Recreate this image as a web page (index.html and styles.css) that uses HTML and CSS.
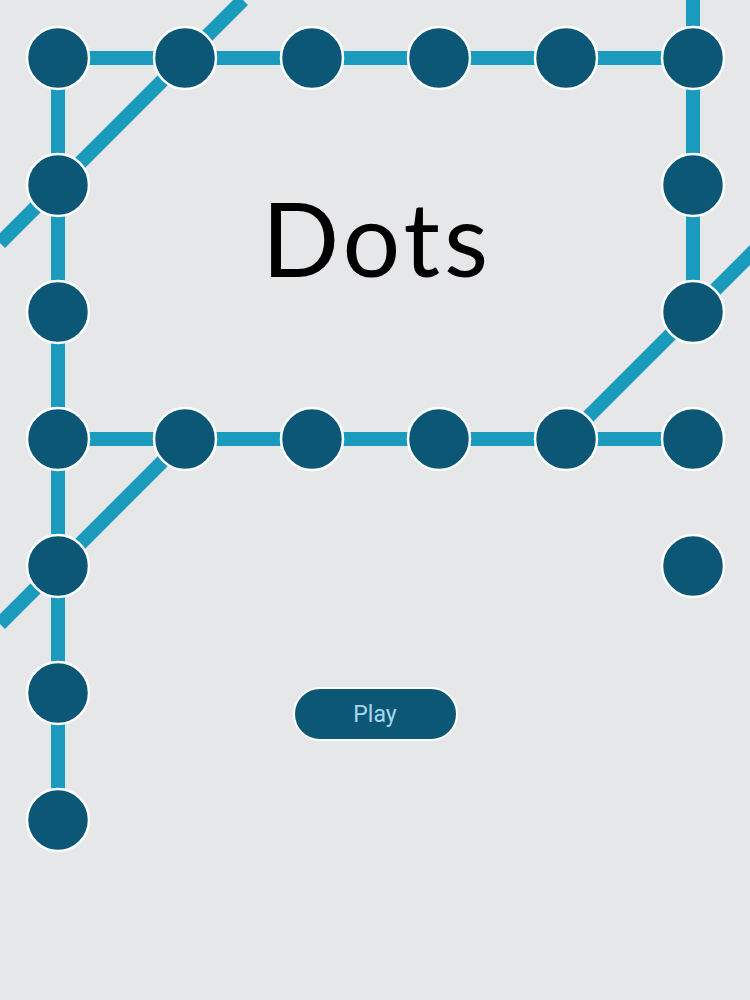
FILE: index.html
```html
<!DOCTYPE html>
<html lang="en">
<head>
  <meta charset="UTF-8" />
  <meta name="viewport" content="width=device-width, initial-scale=1.0"/>
  <title>Dots</title>
  <link rel="stylesheet" href="styles.css">
</head>
<body>
  <!-- board drawn behind the menu -->
  <svg class="board" width="750" height="1000" viewBox="0 0 750 1000">
    <g class="links">
      <line x1="58" y1="58" x2="693" y2="58" />
      <line x1="58" y1="439" x2="693" y2="439" />
      <line x1="58" y1="58" x2="58" y2="820" />
      <line x1="693" y1="0" x2="693" y2="312" />
      <line x1="243" y1="0" x2="0" y2="243" />
      <line x1="185" y1="439" x2="0" y2="624" />
      <line x1="566" y1="439" x2="760" y2="245" />
    </g>
    <g class="dots">
      <circle cx="58" cy="58" r="31" />
      <circle cx="185" cy="58" r="31" />
      <circle cx="312" cy="58" r="31" />
      <circle cx="439" cy="58" r="31" />
      <circle cx="566" cy="58" r="31" />
      <circle cx="693" cy="58" r="31" />
      <circle cx="58" cy="185" r="31" />
      <circle cx="693" cy="185" r="31" />
      <circle cx="58" cy="312" r="31" />
      <circle cx="693" cy="312" r="31" />
      <circle cx="58" cy="439" r="31" />
      <circle cx="185" cy="439" r="31" />
      <circle cx="312" cy="439" r="31" />
      <circle cx="439" cy="439" r="31" />
      <circle cx="566" cy="439" r="31" />
      <circle cx="693" cy="439" r="31" />
      <circle cx="58" cy="566" r="31" />
      <circle cx="693" cy="566" r="31" />
      <circle cx="58" cy="693" r="31" />
      <circle cx="58" cy="820" r="31" />
    </g>
  </svg>

  <div class="menu">
    <h1 class="title">Dots</h1>
    <button class="play" type="button">Play</button>
  </div>
</body>
</html>
```

FILE: styles.css
```css
body {
  margin: 0;
  background: #e6e7e9;
  width: 750px;
  height: 1000px;
  overflow: hidden;
  position: relative;
}
.board {
  position: absolute;
  top: 0;
  left: 0;
}
.links line {
  stroke: #1a9abd;
  stroke-width: 14;
}
.dots circle {
  fill: #0d5776;
  stroke: #ffffff;
  stroke-width: 2.5;
}
.menu {
  position: relative;
  display: flex;
  flex-direction: column;
  align-items: center;
  padding-top: 178px;
}
.title {
  margin: 0 0 0 4px;
  font-family: Lato, "DejaVu Sans", sans-serif;
  font-weight: 400;
  font-size: 102px;
  line-height: 120px;
  color: #000;
  letter-spacing: 4px;
}
.play {
  margin-top: 389px;
  width: 165px;
  height: 54px;
  border: 2px solid #ffffff;
  border-radius: 28px;
  background: #0d5776;
  color: #a9d8ea;
  font-family: Roboto, "Liberation Sans", sans-serif;
  font-size: 23px;
  cursor: pointer;
}
```
